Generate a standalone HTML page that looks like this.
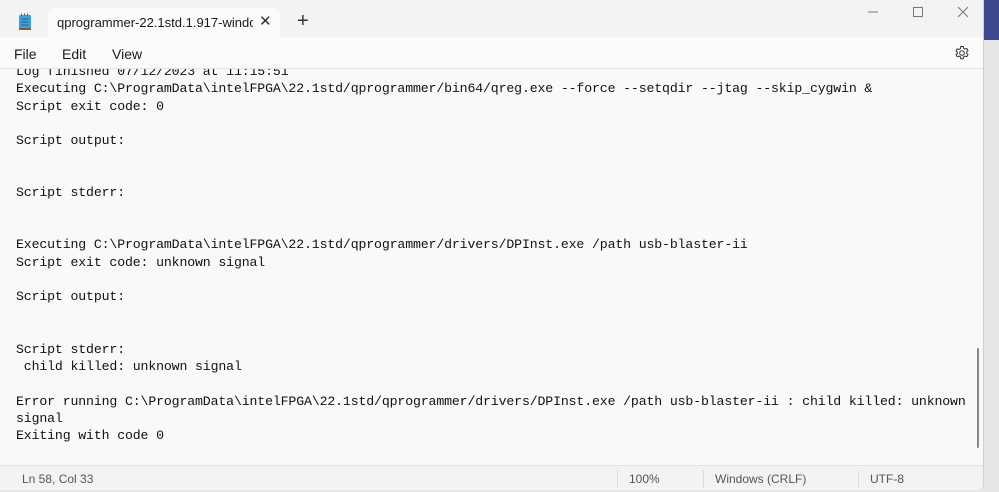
<!DOCTYPE html>
<html><head><meta charset="utf-8"><style>
*{margin:0;padding:0;box-sizing:border-box}
body{width:999px;height:492px;overflow:hidden;background:#e6e6e6;position:relative;font-family:"Liberation Sans",sans-serif}
.corner{position:absolute;left:984px;top:0;width:15px;height:40px;background:#3d4a8f}
.win{position:absolute;left:0;top:0;width:984px;height:490px;background:#f3f3f3;border-right:1px solid #cfcfcf;border-radius:0 0 6px 0;overflow:hidden}
.tab{position:absolute;left:48px;top:8px;width:232px;height:29px;background:#fbfbfb;border-radius:7px 7px 0 0}
.tab .t{position:absolute;left:9px;top:7px;font-size:13px;color:#1a1a1a;white-space:nowrap;width:196px;overflow:hidden}
.tab .x{position:absolute;left:211px;top:4px;font-size:15px;color:#333}
.plus{position:absolute;left:297px;top:10px;font-size:20px;color:#333;font-weight:300}
.menu{position:absolute;left:0;top:37px;width:984px;height:32px;background:#fbfbfb;border-bottom:1px solid #e5e5e5}
.menu span{position:absolute;top:9px;font-size:14px;color:#1a1a1a}
.ed{position:absolute;left:0;top:69px;width:984px;height:396px;background:#f9f9f9;overflow:hidden}
pre{position:absolute;left:16px;top:-6px;font-family:"Liberation Mono",monospace;font-size:13.2px;letter-spacing:-0.13px;line-height:17.35px;color:#111}
.thumb{position:absolute;left:977px;top:279px;width:2px;height:100px;background:#8a8a8a;border-radius:1px}
.status{position:absolute;left:0;top:465px;width:984px;height:25px;background:#f3f3f3;border-top:1px solid #e2e2e2;font-size:12px;color:#555}
.status span{position:absolute;top:6px}
.sep{position:absolute;top:4px;width:1px;height:18px;background:#ddd}
</style></head><body>
<div class="corner"></div>
<div class="win">
<svg style="position:absolute;left:18px;top:13px" width="14" height="18" viewBox="0 0 14 18"><rect x="1" y="2" width="12" height="14" rx="1.5" fill="#3aa0dc"/><rect x="1" y="15" width="12" height="2" fill="#8a5a2a"/><g stroke="#1d5f8f" stroke-width="1"><line x1="3.5" y1="6" x2="10.5" y2="6"/><line x1="3.5" y1="9" x2="10.5" y2="9"/><line x1="3.5" y1="12" x2="10.5" y2="12"/></g><g fill="#1d5f8f"><rect x="3" y="0.5" width="1" height="2"/><rect x="6" y="0.5" width="1" height="2"/><rect x="9" y="0.5" width="1" height="2"/></g></svg>
<div class="tab"><div class="t">qprogrammer-22.1std.1.917-windows</div><div class="x">✕</div></div>
<div class="plus">+</div>
<svg style="position:absolute;left:860px;top:5px" width="120" height="16"><line x1="8" y1="7" x2="18" y2="7" stroke="#777"/><rect x="53.5" y="2.5" width="9" height="9" fill="none" stroke="#777"/><path d="M98 2l10 10M108 2l-10 10" stroke="#777"/></svg>
<div class="menu"><span style="left:14px">File</span><span style="left:62px">Edit</span><span style="left:112px">View</span>
<svg style="position:absolute;left:954px;top:8px" width="16" height="16" viewBox="0 0 16 16"><circle cx="8" cy="8" r="2.3" fill="none" stroke="#333"/><path d="M6.8 1.5h2.4l.4 1.8 1.4.8 1.8-.6 1.2 2.1-1.4 1.2v1.6l1.4 1.2-1.2 2.1-1.8-.6-1.4.8-.4 1.8H6.8l-.4-1.8-1.4-.8-1.8.6-1.2-2.1 1.4-1.2V7.2L2 6l1.2-2.1 1.8.6 1.4-.8z" fill="none" stroke="#333" stroke-width="1"/></svg></div>
<div class="ed"><pre>Log finished 07/12/2023 at 11:15:51
Executing C:\ProgramData\intelFPGA\22.1std/qprogrammer/bin64/qreg.exe --force --setqdir --jtag --skip_cygwin &amp;
Script exit code: 0

Script output:


Script stderr:


Executing C:\ProgramData\intelFPGA\22.1std/qprogrammer/drivers/DPInst.exe /path usb-blaster-ii
Script exit code: unknown signal

Script output:


Script stderr:
 child killed: unknown signal

Error running C:\ProgramData\intelFPGA\22.1std/qprogrammer/drivers/DPInst.exe /path usb-blaster-ii : child killed: unknown
signal
Exiting with code 0</pre><div class="thumb"></div></div>
<div class="status"><span style="left:22px">Ln 58, Col 33</span><div class="sep" style="left:617px"></div><span style="left:629px">100%</span><div class="sep" style="left:703px"></div><span style="left:715px">Windows (CRLF)</span><div class="sep" style="left:858px"></div><span style="left:870px">UTF-8</span></div>
</div>
</body></html>
